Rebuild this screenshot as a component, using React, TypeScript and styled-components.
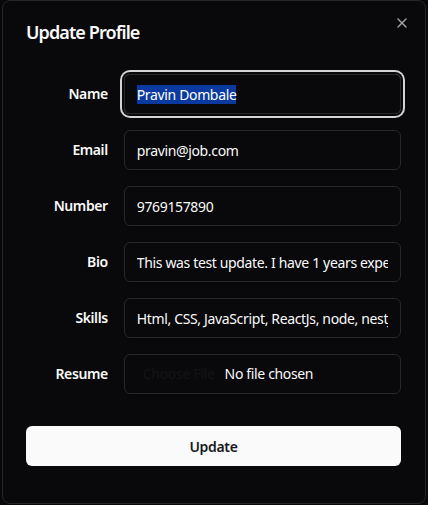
import React, { useEffect, useRef } from "react";
import styled, { createGlobalStyle } from "styled-components";

const Global = createGlobalStyle`
  html, body { margin: 0; padding: 0; background: #08080a; }
  body { font-family: "Noto Sans", "Open Sans", sans-serif; color: #fafafa; overflow: hidden; }
  * { box-sizing: border-box; }
`;

const Dialog = styled.div`
  position: relative;
  margin-left: 2px;
  width: 424px;
  height: 504px;
  background: #09090b;
  border: 1px solid #27272a;
  border-radius: 8px;
  padding: 21px 24px 36px 23px;
  display: flex;
  flex-direction: column;
  gap: 16px;
`;

const Title = styled.h2`
  margin: 0;
  font-size: 18px;
  line-height: 20px;
  font-weight: 600;
  letter-spacing: -0.9px;
  color: #fafafa;
`;

const Close = styled.button`
  position: absolute;
  top: 14px;
  right: 15px;
  width: 16px;
  height: 16px;
  padding: 0;
  border: 0;
  background: transparent;
  color: #a1a1aa;
  display: flex;
  align-items: center;
  justify-content: center;
`;

const Grid = styled.div`
  display: grid;
  grid-template-columns: repeat(4, 1fr);
  row-gap: 16px;
  column-gap: 16px;
  align-items: center;
  padding: 16px 0;
`;

const Label = styled.label`
  text-align: right;
  font-size: 14px;
  font-weight: 600;
  line-height: 14px;
  letter-spacing: -0.4px;
  color: #fafafa;
`;

const Input = styled.input<{ $focused?: boolean }>`
  grid-column: span 3;
  height: 40px;
  width: 100%;
  border: 1px solid #27272a;
  border-radius: 6px;
  background: transparent;
  padding: 8px 12px;
  font-family: inherit;
  font-size: 14px;
  letter-spacing: -0.35px;
  color: #fafafa;
  outline: none;
  box-shadow: ${(p) => (p.$focused ? "0 0 0 2px #09090b, 0 0 0 4px #d4d4d8" : "none")};
  &::selection { background: #0a3a9f; color: #ffffff; }
  &::file-selector-button {
    border: 0;
    background: transparent;
    color: #121214;
    font-family: inherit;
    font-size: 14px;
    font-weight: 500;
    letter-spacing: -0.4px;
    padding: 0 6px;
    margin-right: 4px;
  }
`;

const FileInput = styled(Input)`
  padding-top: 9px;
`;

const Submit = styled.button`
  height: 40px;
  width: 100%;
  border: 0;
  border-radius: 6px;
  background: #fafafa;
  color: #18181b;
  font-family: inherit;
  font-size: 14px;
  font-weight: 600;
  letter-spacing: -0.3px;
`;

const XIcon = () => (
  <svg width="16" height="16" viewBox="0 0 24 24" fill="none" stroke="currentColor" strokeWidth="2" strokeLinecap="round" strokeLinejoin="round">
    <path d="M18 6 6 18" />
    <path d="m6 6 12 12" />
  </svg>
);

export default function App() {
  const nameRef = useRef<HTMLInputElement>(null);
  useEffect(() => {
    const el = nameRef.current;
    if (el) {
      el.focus();
      el.select();
    }
  }, []);
  return (
    <>
      <Global />
      <Dialog>
        <Title>Update Profile</Title>
        <Close aria-label="Close"><XIcon /></Close>
        <Grid>
          <Label htmlFor="name">Name</Label>
          <Input id="name" ref={nameRef} $focused defaultValue="Pravin Dombale" />
          <Label htmlFor="email">Email</Label>
          <Input id="email" defaultValue="pravin@job.com" />
          <Label htmlFor="number">Number</Label>
          <Input id="number" defaultValue="9769157890" />
          <Label htmlFor="bio">Bio</Label>
          <Input id="bio" defaultValue="This was test update. I have 1 years experience in web development" />
          <Label htmlFor="skills">Skills</Label>
          <Input id="skills" defaultValue="Html, CSS, JavaScript, ReactJs, node, nestJs, mongodb" />
          <Label htmlFor="file">Resume</Label>
          <FileInput id="file" type="file" />
        </Grid>
        <Submit>Update</Submit>
      </Dialog>
    </>
  );
}
